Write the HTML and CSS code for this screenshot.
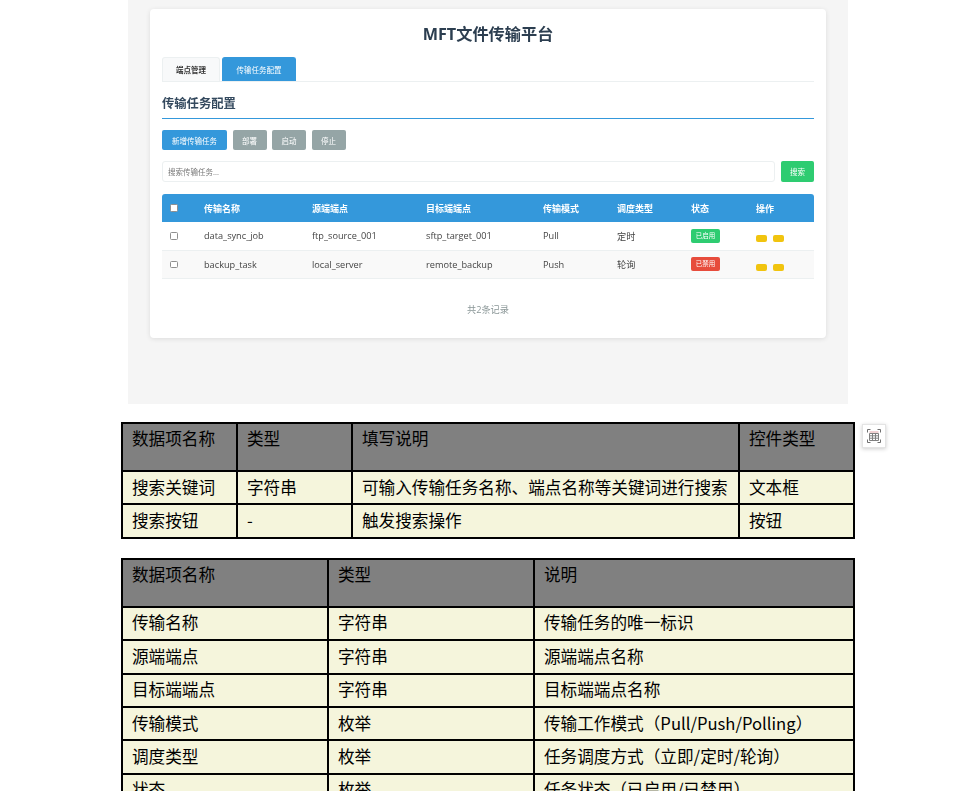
FILE: index.html
```html
<!DOCTYPE html>
<html lang="zh-CN">
<head>
<meta charset="utf-8">
<title>MFT文件传输平台</title>
<link rel="stylesheet" href="styles.css">
</head>
<body>
<main class="page">
  <section class="shot">
    <div class="card">
      <h1 class="title">MFT文件传输平台</h1>
      <div class="tabs">
        <div class="tab">端点管理</div>
        <div class="tab tab-active">传输任务配置</div>
      </div>
      <h2 class="heading">传输任务配置</h2>
      <div class="actions">
        <button class="btn btn-blue btn-new">新增传输任务</button>
        <button class="btn btn-gray">部署</button>
        <button class="btn btn-gray">启动</button>
        <button class="btn btn-gray">停止</button>
      </div>
      <div class="search">
        <input class="search-input" type="text" placeholder="搜索传输任务...">
        <button class="btn btn-green">搜索</button>
      </div>
      <table class="jobs">
        <colgroup>
          <col class="j1"><col class="j2"><col class="j3"><col class="j4"><col class="j5"><col class="j6"><col class="j7"><col class="j8">
        </colgroup>
        <thead>
          <tr>
            <th><input class="check" type="checkbox"></th>
            <th>传输名称</th><th>源端端点</th><th>目标端端点</th><th>传输模式</th><th>调度类型</th><th>状态</th><th>操作</th>
          </tr>
        </thead>
        <tbody>
          <tr>
            <td><input class="check" type="checkbox"></td>
            <td>data_sync_job</td><td>ftp_source_001</td><td>sftp_target_001</td><td>Pull</td><td>定时</td>
            <td><span class="badge badge-on">已启用</span></td>
            <td><div class="ops"><span class="op"></span><span class="op"></span></div></td>
          </tr>
          <tr class="alt">
            <td><input class="check" type="checkbox"></td>
            <td>backup_task</td><td>local_server</td><td>remote_backup</td><td>Push</td><td>轮询</td>
            <td><span class="badge badge-off">已禁用</span></td>
            <td><div class="ops"><span class="op"></span><span class="op"></span></div></td>
          </tr>
        </tbody>
      </table>
      <div class="total">共2条记录</div>
    </div>
  </section>

  <div class="doc-wrap">
    <table class="doc doc-a">
      <colgroup><col class="a1"><col class="a2"><col class="a3"><col class="a4"></colgroup>
      <thead><tr><th>数据项名称</th><th>类型</th><th>填写说明</th><th>控件类型</th></tr></thead>
      <tbody>
        <tr><td>搜索关键词</td><td>字符串</td><td>可输入传输任务名称、端点名称等关键词进行搜索</td><td>文本框</td></tr>
        <tr><td>搜索按钮</td><td>-</td><td>触发搜索操作</td><td>按钮</td></tr>
      </tbody>
    </table>
    <button class="scan" aria-label="表格识别">
      <svg class="scan-icon" width="14" height="14" viewBox="0 0 14 14" fill="none">
        <path d="M.5 3.5V.5H3.5M10.5 .5H13.5V3.5M13.5 10.5V13.5H10.5M3.5 13.5H.5V10.5" stroke="#707070" stroke-width="1"/>
        <path d="M2.5 3H11.5" stroke="#e3a5a8" stroke-width="1"/>
        <path d="M2.5 4.5H11.5V11.5H2.5ZM2.5 6.8H11.5M2.5 9.2H11.5M5.5 4.5V11.5M8.5 4.5V11.5" stroke="#808080" stroke-width="1"/>
      </svg>
    </button>
  </div>

  <table class="doc doc-b">
    <colgroup><col class="b1"><col class="b2"><col class="b3"></colgroup>
    <thead><tr><th>数据项名称</th><th>类型</th><th>说明</th></tr></thead>
    <tbody>
      <tr><td>传输名称</td><td>字符串</td><td>传输任务的唯一标识</td></tr>
      <tr><td>源端端点</td><td>字符串</td><td>源端端点名称</td></tr>
      <tr><td>目标端端点</td><td>字符串</td><td>目标端端点名称</td></tr>
      <tr><td>传输模式</td><td>枚举</td><td>传输工作模式（Pull/Push/Polling）</td></tr>
      <tr><td>调度类型</td><td>枚举</td><td>任务调度方式（立即/定时/轮询）</td></tr>
      <tr><td>状态</td><td>枚举</td><td>任务状态（已启用/已禁用）</td></tr>
    </tbody>
  </table>
</main>
</body>
</html>
```

FILE: styles.css
```css
html, body {
  margin: 0;
  padding: 0;
  background: #fff;
  overflow: hidden;
}
body {
  height: 791px;
  font-family: "Open Sans", "Noto Sans CJK SC", sans-serif;
}
.page {
  width: 734px;
  margin-left: 121px;
}

/* Embedded screenshot */
.shot {
  box-sizing: border-box;
  width: 720px;
  height: 404px;
  margin: 0 7px;
  padding: 9px 22px 0;
  background: #f5f5f5;
  filter: blur(0.35px);
}
.card {
  box-sizing: border-box;
  height: 329px;
  padding: 13px 12px 0;
  background: #fff;
  border-radius: 4px;
  box-shadow: 0 1px 5px rgba(0, 0, 0, 0.1);
}
.title {
  margin: 0;
  height: 24px;
  font: 700 16.2px/24px "Open Sans", "Noto Sans CJK SC", sans-serif;
  color: #2c3e50;
  text-align: center;
}
.tabs {
  display: flex;
  gap: 2px;
  height: 24px;
  margin-top: 11px;
  border-bottom: 1px solid #ecf0f1;
}
.tab {
  box-sizing: border-box;
  width: 58px;
  height: 24px;
  border: 1px solid #ecf0f1;
  border-bottom: 0;
  border-radius: 3px 3px 0 0;
  background: #f8f9fa;
  font-size: 7.5px;
  font-weight: 600;
  line-height: 24px;
  text-align: center;
  color: #333;
}
.tab-active {
  width: 74px;
  background: #3498db;
  border-color: #3498db;
  font-weight: 400;
  color: #fff;
}
.heading {
  box-sizing: border-box;
  height: 37px;
  margin: 0;
  padding-top: 12px;
  border-bottom: 1px solid #3498db;
  font: 700 12.3px/20px "Open Sans", "Noto Sans CJK SC", sans-serif;
  color: #34495e;
}
.actions {
  display: flex;
  gap: 5.5px;
  margin-top: 11px;
}
.btn {
  box-sizing: border-box;
  height: 20px;
  padding: 0;
  border: 0;
  border-radius: 2px;
  font-family: "Open Sans", "Noto Sans CJK SC", sans-serif;
  font-size: 7.5px;
  color: #fff;
}
.btn-blue { background: #3498db; }
.btn-new { width: 65px; }
.btn-gray { width: 34px; background: #95a5a6; }
.btn-green { width: 33px; height: 21px; background: #2ecc71; }
.search {
  display: flex;
  gap: 6px;
  margin-top: 11px;
}
.search-input {
  box-sizing: border-box;
  flex: 1;
  min-width: 0;
  height: 21px;
  padding: 0 5px;
  border: 1px solid #ecf0f1;
  border-radius: 3px;
  background: #fff;
  font-family: "Open Sans", "Noto Sans CJK SC", sans-serif;
  font-size: 7.5px;
  outline: none;
}
.search-input::placeholder { color: #777; }
.jobs {
  width: 652px;
  margin-top: 12px;
  border-collapse: separate;
  border-spacing: 0;
  table-layout: fixed;
  font-size: 9.2px;
  color: #444;
}
.j1 { width: 34px; }
.j2 { width: 108px; }
.j3 { width: 114px; }
.j4 { width: 117px; }
.j5 { width: 74px; }
.j6 { width: 74px; }
.j7 { width: 65px; }
.j8 { width: 66px; }
.jobs th {
  height: 28px;
  padding: 0 8px;
  background: #3498db;
  color: #fff;
  font-size: 9px;
  font-weight: 700;
  text-align: left;
}
.jobs th:first-child { border-radius: 3px 0 0 0; }
.jobs th:last-child { border-radius: 0 3px 0 0; }
.jobs td {
  height: 27.5px;
  padding: 0 8px;
  border-bottom: 1px solid #ecf0f1;
}
.jobs .alt td { background: #f9f9f9; }
.check {
  appearance: none;
  display: block;
  box-sizing: border-box;
  width: 7.5px;
  height: 7.5px;
  margin: 0;
  border: 1px solid #8f8f8f;
  border-radius: 1.5px;
  background: #fff;
}
.badge {
  display: block;
  width: 29px;
  height: 14px;
  border-radius: 2px;
  font-size: 6.5px;
  line-height: 14px;
  text-align: center;
  color: #fff;
}
.badge-on { background: #2ecc71; }
.badge-off { background: #e74c3c; }
.ops {
  display: flex;
  gap: 6px;
  padding-top: 6px;
}
.op {
  width: 11px;
  height: 7px;
  border-radius: 2px;
  background: #f1c40f;
}
.total {
  margin-top: 24px;
  font-size: 9.2px;
  line-height: 13px;
  text-align: center;
  color: #8a9697;
}

/* Document tables */
.doc-wrap {
  position: relative;
  margin-top: 18px;
}
.doc {
  width: 732px;
  border-collapse: collapse;
  table-layout: fixed;
  font-family: "Noto Sans CJK SC", sans-serif;
  font-size: 16.64px;
  color: #000;
}
.doc th,
.doc td {
  padding: 0 9px;
  border: 2px solid #000;
  text-align: left;
  font-weight: 400;
  white-space: nowrap;
}
.doc th {
  height: 46px;
  padding-top: 2px;
  padding-bottom: 20px;
  box-sizing: border-box;
  background: #808080;
  line-height: 24px;
}
.doc td {
  height: 33.4px;
  box-sizing: border-box;
  padding-bottom: 2px;
  background: #f5f5dc;
  line-height: 24px;
}
.a1 { width: 115px; }
.a2 { width: 115px; }
.a3 { width: 387px; }
.a4 { width: 115px; }
.b1 { width: 206px; }
.b2 { width: 206px; }
.b3 { width: 320px; }
.doc-b { margin-top: 19px; }
.scan {
  position: absolute;
  left: 741px;
  top: 2px;
  display: flex;
  align-items: center;
  justify-content: center;
  box-sizing: border-box;
  width: 24px;
  height: 24px;
  padding: 0;
  border: 1px solid #e4e4e4;
  background: #fff;
  box-shadow: 0 1px 4px rgba(0, 0, 0, 0.2);
}
```
